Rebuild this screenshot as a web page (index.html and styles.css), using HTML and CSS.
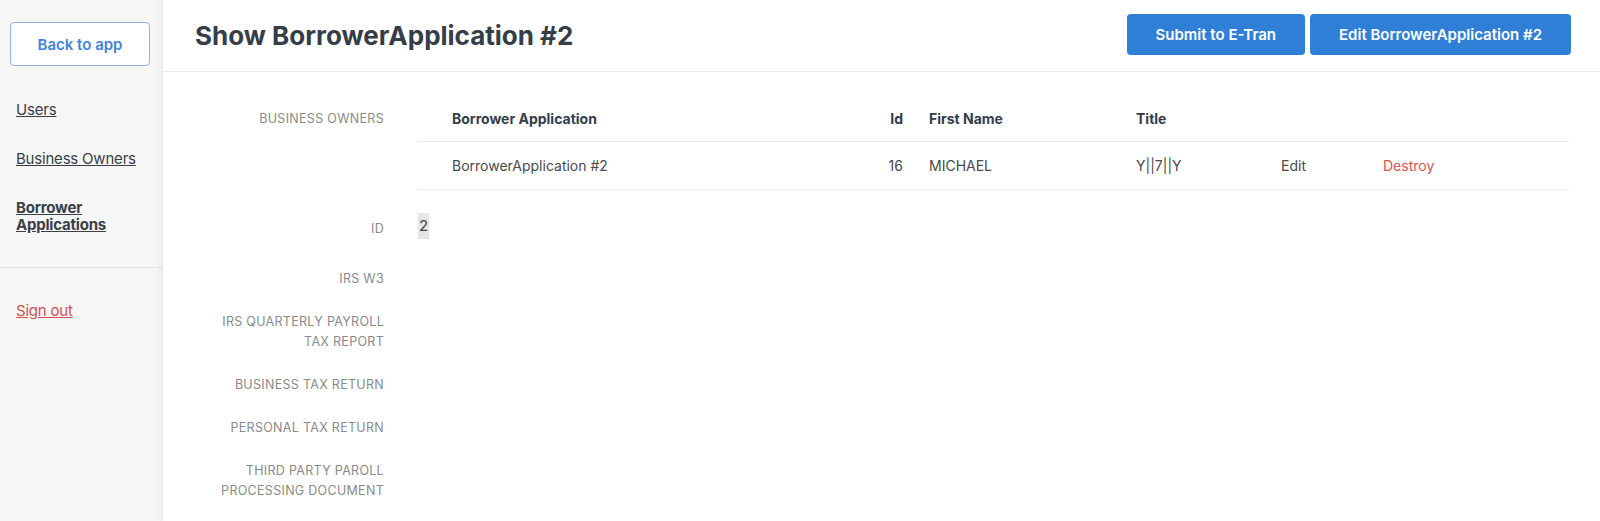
FILE: index.html
```html
<!DOCTYPE html>
<html lang="en">
<head>
    <meta charset="UTF-8">
    <meta name="viewport" content="width=device-width, initial-scale=1.0">
    <title>Show BorrowerApplication #2</title>
    <link rel="stylesheet" href="styles.css">
</head>
<body>
    <div class="app">
        <nav class="sidebar">
            <a class="back-button" href="#">Back to app</a>
            <ul class="nav-list">
                <li><a class="nav-link" href="#">Users</a></li>
                <li><a class="nav-link" href="#">Business Owners</a></li>
                <li><a class="nav-link active" href="#">Borrower<br>Applications</a></li>
            </ul>
            <div class="nav-divider"></div>
            <div class="sign-out-row"><a class="sign-out" href="#">Sign out</a></div>
        </nav>

        <main class="main">
            <header class="page-header">
                <h1 class="page-title">Show BorrowerApplication #2</h1>
                <div class="actions">
                    <a class="button" href="#">Submit to E-Tran</a>
                    <a class="button" href="#">Edit BorrowerApplication #2</a>
                </div>
            </header>

            <dl class="attributes">
                <dt class="label label-table">Business Owners</dt>
                <dd class="data data-table">
                    <table class="owners">
                        <thead>
                            <tr>
                                <th class="c-app">Borrower Application</th>
                                <th class="c-id">Id</th>
                                <th class="c-first">First Name</th>
                                <th class="c-title">Title</th>
                                <th class="c-edit"></th>
                                <th class="c-destroy"></th>
                            </tr>
                        </thead>
                        <tbody>
                            <tr>
                                <td class="c-app">BorrowerApplication #2</td>
                                <td class="c-id">16</td>
                                <td class="c-first">MICHAEL</td>
                                <td class="c-title">Y||7||Y</td>
                                <td class="c-edit"><a href="#">Edit</a></td>
                                <td class="c-destroy"><a href="#" class="danger">Destroy</a></td>
                            </tr>
                        </tbody>
                    </table>
                </dd>

                <dt class="label label-id">Id</dt>
                <dd class="data data-id"><span class="selected">2</span></dd>

                <dt class="label">Irs W3</dt>
                <dd class="data"></dd>

                <dt class="label">Irs Quarterly Payroll<br>Tax Report</dt>
                <dd class="data"></dd>

                <dt class="label">Business Tax Return</dt>
                <dd class="data"></dd>

                <dt class="label">Personal Tax Return</dt>
                <dd class="data"></dd>

                <dt class="label">Third Party Paroll<br>Processing Document</dt>
                <dd class="data"></dd>
            </dl>
        </main>
    </div>
</body>
</html>
```

FILE: styles.css
```css
/* layout */
body, html {
    margin: 0;
    padding: 0;
    height: 100%;
    font-family: Inter, "Liberation Sans", Arial, sans-serif;
    color: #333d4b;
    background: #f6f6f6;
    overflow: hidden;
}
.app {
    display: flex;
    height: 100%;
}

/* sidebar */
.sidebar {
    width: 163px;
    flex-shrink: 0;
    background: #f6f6f6;
    padding-top: 22px;
    box-sizing: border-box;
}
.back-button {
    display: flex;
    align-items: center;
    justify-content: center;
    width: 140px;
    height: 44px;
    margin-left: 10px;
    box-sizing: border-box;
    border: 1px solid #8fb4e4;
    border-radius: 4px;
    background: #fff;
    color: #3f84d9;
    font-size: 15px;
    font-weight: 600;
    text-decoration: none;
}
.nav-list {
    list-style: none;
    margin: 35px 0 0;
    padding: 0 0 0 16px;
    font-size: 15px;
    line-height: 17px;
}
.nav-list li {
    margin-bottom: 32px;
}
.nav-list li:last-child {
    margin-bottom: 0;
}
.nav-link {
    color: #3a3f47;
    letter-spacing: -0.2px;
}
.nav-link.active {
    font-weight: 700;
}
.nav-divider {
    height: 1px;
    background: #e4e4e4;
    margin: 34px 0 34px;
}
.sign-out-row {
    padding-left: 16px;
    font-size: 15px;
    line-height: 17px;
}
.sign-out {
    color: #d0504f;
    letter-spacing: -0.2px;
}

/* main content */
.main {
    flex: 1;
    background: #fff;
    box-shadow: -2px 0 6px rgba(0, 0, 0, 0.06);
}
.page-header {
    display: flex;
    align-items: center;
    justify-content: space-between;
    height: 71px;
    padding: 0 29px 0 32px;
    border-bottom: 1px solid #ececec;
}
.page-title {
    margin: 0;
    font-size: 26px;
    font-weight: 700;
    color: #353d48;
}
.actions {
    display: flex;
    gap: 5px;
    margin-top: -3px;
}
.button {
    display: flex;
    align-items: center;
    height: 41px;
    padding: 0 29px;
    background: #2f7fd7;
    color: #fff;
    border-radius: 4px;
    font-size: 15px;
    font-weight: 600;
    text-decoration: none;
}

/* attributes */
.attributes {
    display: grid;
    grid-template-columns: 189px 1fr;
    column-gap: 34px;
    margin: 0;
    padding: 24px 31px 0 32px;
}
.label {
    text-align: right;
    text-transform: uppercase;
    font-size: 12.5px;
    line-height: 20px;
    color: #8a8a8a;
    letter-spacing: 0.3px;
    margin-bottom: 23px;
}
.data {
    margin: 0 0 23px;
    font-size: 15px;
    line-height: 26px;
    color: #444;
}
.label-table {
    padding-top: 13px;
}
.label-id {
    padding-top: 6px;
}
.data-id {
    margin-bottom: 30px;
}
.selected {
    display: inline-block;
    background: #e6e6e6;
    padding: 0 1px;
}

/* business owners table */
.owners {
    width: 100%;
    border-collapse: collapse;
    table-layout: fixed;
    font-size: 14px;
}
.owners th {
    text-align: left;
    font-weight: 700;
    color: #333d4b;
    height: 45px;
    padding: 0;
    border-bottom: 1px solid #e8e8e8;
}
.owners td {
    height: 47px;
    padding: 0;
    color: #4a4a4a;
    border-bottom: 1px solid #ececec;
}
.owners a {
    color: #4a4a4a;
    text-decoration: none;
}
.owners a.danger {
    color: #d9534f;
}
.c-app { width: 428px; padding-left: 34px !important; }
.c-id { width: 23px; text-align: right !important; }
.c-first { width: 207px; padding-left: 26px !important; }
.c-title { width: 145px; }
.c-edit { width: 102px; }
.c-destroy { width: auto; }
```
